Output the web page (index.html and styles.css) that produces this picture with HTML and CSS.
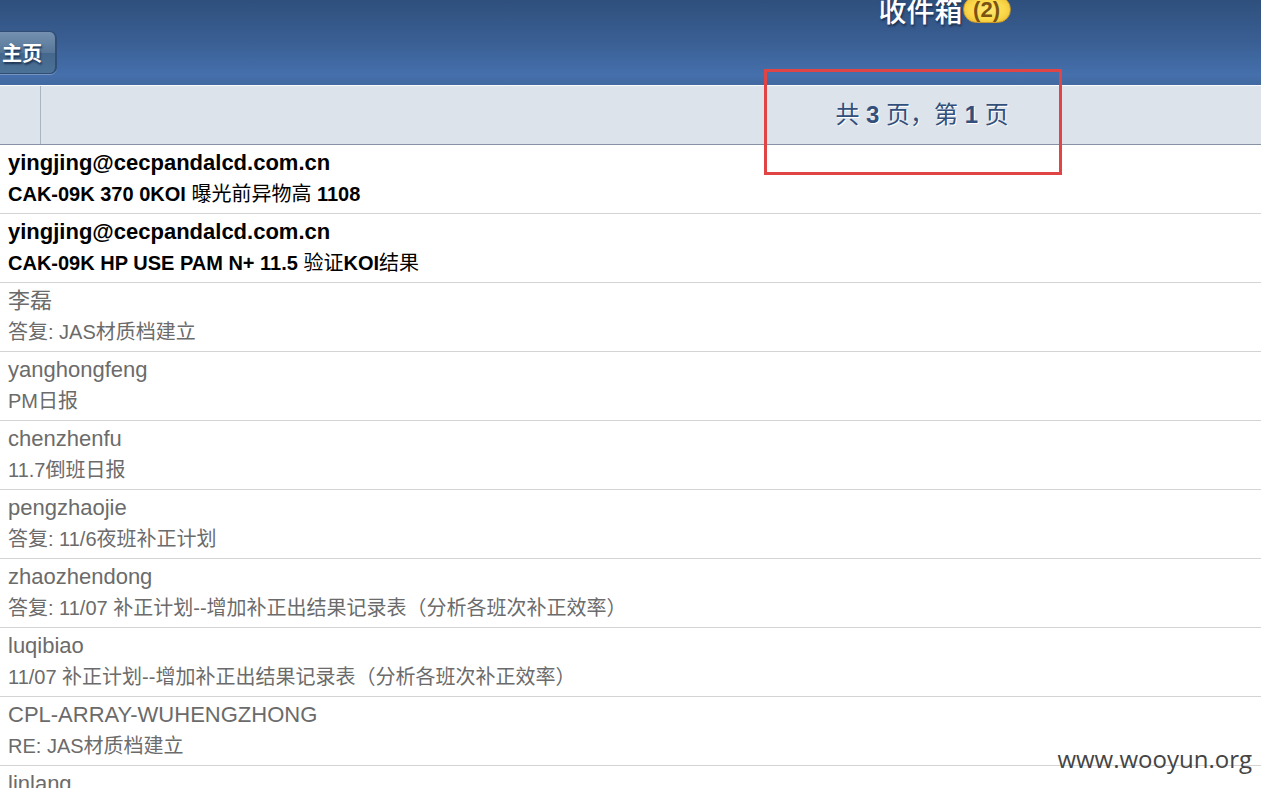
FILE: index.html
```html
<!DOCTYPE html>
<html lang="zh-CN">
<head>
<meta charset="utf-8">
<meta name="viewport" content="width=device-width, initial-scale=1">
<title>收件箱</title>
<link rel="stylesheet" href="styles.css">
</head>
<body>
<header class="topbar">
  <h1 class="title">收件箱<span class="badge">(2)</span></h1>
  <button class="home" type="button">主页</button>
</header>
<nav class="pager">
  <span class="pager-cell"></span>
  <p class="pager-text"><span class="han">共</span> 3 <span class="han">页，第</span> 1 <span class="han">页</span></p>
</nav>
<main>
  <ul class="mails">
    <li><a class="mail unread" href="#m1"><span class="sender">yingjing@cecpandalcd.com.cn</span><span class="subject">CAK-09K 370 0KOI <span class="han">曝光前异物高</span> 1108</span></a></li>
    <li><a class="mail unread" href="#m2"><span class="sender">yingjing@cecpandalcd.com.cn</span><span class="subject">CAK-09K HP USE PAM N+ 11.5 <span class="han">验证</span>KOI<span class="han">结果</span></span></a></li>
    <li><a class="mail" href="#m3"><span class="sender">李磊</span><span class="subject">答复: JAS材质档建立</span></a></li>
    <li><a class="mail" href="#m4"><span class="sender">yanghongfeng</span><span class="subject">PM日报</span></a></li>
    <li><a class="mail" href="#m5"><span class="sender">chenzhenfu</span><span class="subject">11.7倒班日报</span></a></li>
    <li><a class="mail" href="#m6"><span class="sender">pengzhaojie</span><span class="subject">答复: 11/6夜班补正计划</span></a></li>
    <li><a class="mail" href="#m7"><span class="sender">zhaozhendong</span><span class="subject">答复: 11/07 补正计划--增加补正出结果记录表（分析各班次补正效率）</span></a></li>
    <li><a class="mail" href="#m8"><span class="sender">luqibiao</span><span class="subject">11/07 补正计划--增加补正出结果记录表（分析各班次补正效率）</span></a></li>
    <li><a class="mail" href="#m9"><span class="sender">CPL-ARRAY-WUHENGZHONG</span><span class="subject">RE: JAS材质档建立</span></a></li>
    <li><a class="mail" href="#m10"><span class="sender">linlang</span></a></li>
  </ul>
</main>
<div class="highlight"></div>
<div class="watermark">www.wooyun.org</div>
</body>
</html>
```
FILE: styles.css
```css
* {
  box-sizing: border-box;
}

body {
  position: relative;
  height: 100vh;
  margin: 0;
  overflow: hidden;
  background: #fff;
  font-family: "Liberation Sans", "Noto Sans CJK SC", sans-serif;
}

.topbar {
  height: 85px;
  background: linear-gradient(#2f507d, #3a5f94 50%, #4570ac 88%, #42699f);
}

.title {
  display: flex;
  justify-content: center;
  height: 31px;
  margin: 0;
  padding-left: 46%;
  color: #fff;
  font-size: 28px;
  font-weight: 500;
  line-height: 26px;
  text-shadow: 1px 2px 2px #1c3150;
}

.badge {
  align-self: flex-start;
  width: 48px;
  height: 27px;
  margin: -4px -48px 0 0;
  border: 1px solid #c99a2c;
  border-radius: 14px;
  background: radial-gradient(#ffe873, #fbd84a 55%, #e8b62c);
  color: #7a5312;
  font-size: 22px;
  font-weight: 700;
  line-height: 26px;
  text-align: center;
  text-shadow: none;
}

.home {
  display: block;
  height: 43px;
  padding: 0 13px 0 2px;
  border: 1px solid #2f4d75;
  border-width: 1px 2px 1px 0;
  border-radius: 0 7px 7px 0;
  background: linear-gradient(#7590b0, #577798 50%, #45678c 51%, #4c7298);
  box-shadow: 0 1px 0 #7595c0;
  color: #fff;
  font-family: inherit;
  font-size: 20px;
  font-weight: 700;
  text-shadow: 1px 2px 2px #1c3150;
}

.pager {
  display: flex;
  height: 60px;
  border-top: 1px solid #f8fafc;
  border-bottom: 1px solid #8793a5;
  background: #dce3eb;
}

.pager-cell {
  flex: none;
  width: 41px;
  border-right: 1px solid #a9b4c1;
}

.pager-text {
  flex: 1;
  margin: 0;
  padding-left: 43%;
  color: #334f7b;
  font-size: 24px;
  font-weight: 700;
  line-height: 58px;
  text-align: center;
  text-shadow: 1px 1px 0 #fff;
}

.mails {
  margin: 0;
  padding: 0;
  list-style: none;
}

.mail {
  display: block;
  padding: 2px 8px;
  border-bottom: 1px solid #d4d4d4;
  color: #6b6b6b;
  text-decoration: none;
}

.sender,
.subject {
  display: block;
  white-space: nowrap;
}

.sender {
  height: 31px;
  font-size: 22px;
  line-height: 31px;
}

.subject {
  height: 33px;
  font-size: 20px;
  line-height: 33px;
}

.unread {
  color: #000;
  font-weight: 700;
}

.han {
  font-weight: 400;
}

.highlight {
  position: absolute;
  top: 69px;
  right: 199px;
  width: 298px;
  height: 106px;
  border: 3px solid #e04444;
}

.watermark {
  position: absolute;
  right: 9px;
  bottom: 12px;
  color: #444;
  font-family: "Open Sans", "Noto Sans", sans-serif;
  font-size: 24px;
  line-height: 34px;
}
```
